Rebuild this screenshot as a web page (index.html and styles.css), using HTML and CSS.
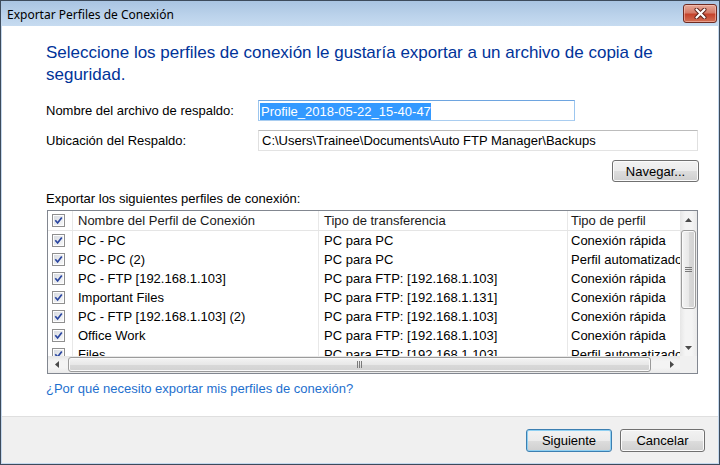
FILE: index.html
```html
<!DOCTYPE html>
<html lang="es">
<head>
<meta charset="utf-8">
<title>Exportar Perfiles de Conexión</title>
<link rel="stylesheet" href="styles.css">
</head>
<body>
<div class="window">
  <div class="titlebar">
    <span class="title">Exportar Perfiles de Conexión</span>
    <div class="close">
      <svg width="13" height="11" viewBox="0 0 13 11">
        <path d="M2.5 1.5 L10.5 9.5 M10.5 1.5 L2.5 9.5" stroke="#5a2018" stroke-width="4" stroke-linecap="round" fill="none"/>
        <path d="M2.5 1.5 L10.5 9.5 M10.5 1.5 L2.5 9.5" stroke="#ffffff" stroke-width="2.2" stroke-linecap="round" fill="none"/>
      </svg>
    </div>
  </div>
  <div class="client">
    <div class="content">
      <h1 class="heading">Seleccione los perfiles de conexión le gustaría exportar a un archivo de copia de<br>seguridad.</h1>
      <div class="form-row first">
        <span class="label">Nombre del archivo de respaldo:</span>
        <div class="input focus short"><span class="sel">Profile_2018-05-22_15-40-47</span></div>
      </div>
      <div class="form-row">
        <span class="label">Ubicación del Respaldo:</span>
        <div class="input long"><span class="val">C:\Users\Trainee\Documents\Auto FTP Manager\Backups</span></div>
      </div>
      <div class="browse-row">
        <button class="btn browse">Navegar...</button>
      </div>
      <div class="list-label">Exportar los siguientes perfiles de conexión:</div>
      <div class="listview">
        <div class="lv-body">
          <div class="lv-row lv-head">
            <div class="cell c0"><span class="cb"><svg viewBox="0 0 9 9"><path d="M1.3 4.3 L3.6 7 L7.8 1.4" stroke="#2a46a0" stroke-width="1.7" fill="none"/></svg></span></div>
            <div class="cell c1">Nombre del Perfil de Conexión</div>
            <div class="cell c2">Tipo de transferencia</div>
            <div class="cell c3">Tipo de perfil</div>
          </div>
          <div class="lv-row">
            <div class="cell c0"><span class="cb"><svg viewBox="0 0 9 9"><path d="M1.3 4.3 L3.6 7 L7.8 1.4" stroke="#2a46a0" stroke-width="1.7" fill="none"/></svg></span></div>
            <div class="cell c1">PC - PC</div>
            <div class="cell c2">PC para PC</div>
            <div class="cell c3">Conexión rápida</div>
          </div>
          <div class="lv-row">
            <div class="cell c0"><span class="cb"><svg viewBox="0 0 9 9"><path d="M1.3 4.3 L3.6 7 L7.8 1.4" stroke="#2a46a0" stroke-width="1.7" fill="none"/></svg></span></div>
            <div class="cell c1">PC - PC (2)</div>
            <div class="cell c2">PC para PC</div>
            <div class="cell c3">Perfil automatizado</div>
          </div>
          <div class="lv-row">
            <div class="cell c0"><span class="cb"><svg viewBox="0 0 9 9"><path d="M1.3 4.3 L3.6 7 L7.8 1.4" stroke="#2a46a0" stroke-width="1.7" fill="none"/></svg></span></div>
            <div class="cell c1">PC - FTP [192.168.1.103]</div>
            <div class="cell c2">PC para FTP: [192.168.1.103]</div>
            <div class="cell c3">Conexión rápida</div>
          </div>
          <div class="lv-row">
            <div class="cell c0"><span class="cb"><svg viewBox="0 0 9 9"><path d="M1.3 4.3 L3.6 7 L7.8 1.4" stroke="#2a46a0" stroke-width="1.7" fill="none"/></svg></span></div>
            <div class="cell c1">Important Files</div>
            <div class="cell c2">PC para FTP: [192.168.1.131]</div>
            <div class="cell c3">Conexión rápida</div>
          </div>
          <div class="lv-row">
            <div class="cell c0"><span class="cb"><svg viewBox="0 0 9 9"><path d="M1.3 4.3 L3.6 7 L7.8 1.4" stroke="#2a46a0" stroke-width="1.7" fill="none"/></svg></span></div>
            <div class="cell c1">PC - FTP [192.168.1.103] (2)</div>
            <div class="cell c2">PC para FTP: [192.168.1.103]</div>
            <div class="cell c3">Conexión rápida</div>
          </div>
          <div class="lv-row">
            <div class="cell c0"><span class="cb"><svg viewBox="0 0 9 9"><path d="M1.3 4.3 L3.6 7 L7.8 1.4" stroke="#2a46a0" stroke-width="1.7" fill="none"/></svg></span></div>
            <div class="cell c1">Office Work</div>
            <div class="cell c2">PC para FTP: [192.168.1.103]</div>
            <div class="cell c3">Conexión rápida</div>
          </div>
          <div class="lv-row">
            <div class="cell c0"><span class="cb"><svg viewBox="0 0 9 9"><path d="M1.3 4.3 L3.6 7 L7.8 1.4" stroke="#2a46a0" stroke-width="1.7" fill="none"/></svg></span></div>
            <div class="cell c1">Files</div>
            <div class="cell c2">PC para FTP: [192.168.1.103]</div>
            <div class="cell c3">Perfil automatizado</div>
          </div>
        </div>
        <div class="vscroll">
          <div class="sb-btn"><svg width="7" height="4" viewBox="0 0 7 4"><path d="M0 4 L3.5 0 L7 4 Z" fill="#4a4a4a"/></svg></div>
          <div class="vthumb"><svg width="7" height="5" viewBox="0 0 7 5"><path d="M0 0.5 H7 M0 2.5 H7 M0 4.5 H7" stroke="#7a7a7a" stroke-width="1"/></svg></div>
          <div class="sb-fill"></div>
          <div class="sb-btn"><svg width="7" height="4" viewBox="0 0 7 4"><path d="M0 0 L3.5 4 L7 0 Z" fill="#4a4a4a"/></svg></div>
        </div>
        <div class="hscroll">
          <div class="sb-btn"><svg width="4" height="7" viewBox="0 0 4 7"><path d="M4 0 L0 3.5 L4 7 Z" fill="#4a4a4a"/></svg></div>
          <div class="hthumb"><svg width="5" height="7" viewBox="0 0 5 7"><path d="M0.5 0 V7 M2.5 0 V7 M4.5 0 V7" stroke="#7a7a7a" stroke-width="1"/></svg></div>
          <div class="sb-fill"></div>
          <div class="sb-btn"><svg width="4" height="7" viewBox="0 0 4 7"><path d="M0 0 L4 3.5 L0 7 Z" fill="#4a4a4a"/></svg></div>
        </div>
        <div class="corner"></div>
      </div>
      <a class="help-link" href="#">¿Por qué necesito exportar mis perfiles de conexión?</a>
    </div>
    <div class="footer">
      <button class="btn default next">Siguiente</button>
      <button class="btn cancel">Cancelar</button>
    </div>
  </div>
</div>
</body>
</html>
```
FILE: styles.css
```css
html, body {
  margin: 0;
  padding: 0;
}
body {
  width: 720px;
  height: 465px;
  overflow: hidden;
  font-family: "Liberation Sans", Arial, sans-serif;
  font-size: 13px;
  color: #000;
}
.window {
  width: 720px;
  height: 465px;
  box-sizing: border-box;
  border: 1px solid #3d4b5c;
  background: #c4d8ee;
  display: flex;
  flex-direction: column;
}
.titlebar {
  height: 25px;
  flex: none;
  display: flex;
  align-items: flex-start;
  background: linear-gradient(#a9c4e2, #bcd3eb 60%, #c6dbf0);
}
.title {
  font-family: "Noto Sans", "Liberation Sans", sans-serif;
  font-size: 12px;
  line-height: 16px;
  margin: 6px 0 0 6px;
  color: #000;
}
.close {
  margin: 3px 2px 0 auto;
  width: 34px;
  height: 19px;
  box-sizing: border-box;
  border: 1px solid #6e2b22;
  border-radius: 3px;
  background: linear-gradient(#e6a898, #d57c69 45%, #c5432c 55%, #d27055);
  box-shadow: inset 0 0 0 1px rgba(255, 210, 200, 0.5);
  display: flex;
  align-items: center;
  justify-content: center;
}
.close svg {
  display: block;
}
.client {
  flex: 1;
  margin: 0 1px 1px;
  background: #fff;
  display: flex;
  flex-direction: column;
}
.content {
  flex: 1;
  padding: 16px 19px 0 44px;
  display: flex;
  flex-direction: column;
}
.heading {
  margin: 0;
  font-family: "Liberation Sans", Arial, sans-serif;
  font-weight: normal;
  font-size: 17px;
  line-height: 22px;
  color: #003399;
}
.form-row {
  display: flex;
  align-items: center;
  height: 21px;
  margin-top: 9px;
}
.form-row.first {
  margin-top: 14px;
}
.label {
  width: 212px;
  flex: none;
  line-height: 16px;
}
.input {
  box-sizing: border-box;
  height: 21px;
  border: 1px solid;
  border-color: #bcbcbc #e0e0e0 #e3e3e3 #e0e0e0;
  display: flex;
  align-items: center;
  padding-left: 1px;
  white-space: nowrap;
  overflow: hidden;
}
.input.focus {
  border-color: #6ea5e0 #9cc6ef #a9cdf0 #9cc6ef;
}
.input.short {
  width: 317px;
}
.input.long {
  width: 440px;
}
.sel {
  background: #3399ff;
  color: #fff;
  line-height: 17px;
  padding-left: 1px;
  margin-top: 1px;
}
.val {
  padding-left: 2px;
  line-height: 16px;
}
.browse-row {
  display: flex;
  justify-content: flex-end;
  margin-top: 9px;
}
.btn {
  font-family: "Liberation Sans", Arial, sans-serif;
  font-size: 13px;
  color: #000;
  box-sizing: border-box;
  height: 22px;
  padding: 0;
  border: 1px solid #707070;
  border-radius: 3px;
  background: linear-gradient(#f2f2f2, #ebebeb 50%, #dddddd 51%, #cfcfcf);
  box-shadow: inset 0 0 0 1px #fbfbfb;
}
.btn.browse {
  width: 87px;
}
.list-label {
  margin-top: 9px;
  line-height: 16px;
}
.listview {
  margin: 3px 0 0 1px;
  width: 651px;
  height: 164px;
  box-sizing: border-box;
  border: 1px solid #828790;
  display: grid;
  grid-template-columns: 632px 17px;
  grid-template-rows: 145px 17px;
}
.lv-body {
  overflow: hidden;
  grid-column: 1;
  grid-row: 1;
}
.lv-row {
  display: flex;
  height: 19px;
  width: 760px;
}
.lv-head {
  height: 20px;
  box-sizing: border-box;
  border-bottom: 1px solid #e5e5e5;
}
.cell {
  box-sizing: border-box;
  border-right: 1px solid #e8e8e8;
  line-height: 19px;
  white-space: nowrap;
  overflow: hidden;
  flex: none;
}
.c0 {
  width: 25px;
  padding-left: 4px;
  display: flex;
  align-items: center;
}
.c1 {
  width: 246px;
  padding-left: 5px;
}
.c2 {
  width: 249px;
  padding-left: 5px;
}
.c3 {
  width: 240px;
  padding-left: 3px;
  border-right: none;
}
.lv-head .cell {
  color: #1a1a1a;
}
.cb {
  display: block;
  width: 13px;
  height: 13px;
  box-sizing: border-box;
  border: 1px solid #8f8f8f;
  padding: 1px;
  background: #fdfdfd;
}
.cb svg {
  display: block;
  width: 9px;
  height: 9px;
  background: linear-gradient(135deg, #d8dbe1, #f6f7f8);
}
.vscroll {
  grid-column: 2;
  grid-row: 1;
  display: flex;
  flex-direction: column;
  background: linear-gradient(90deg, #e6e6e6, #f4f4f4 30%, #f4f4f4 70%, #e9e9e9);
}
.hscroll {
  grid-column: 1;
  grid-row: 2;
  display: flex;
  background: linear-gradient(#e6e6e6, #f4f4f4 30%, #f4f4f4 70%, #e9e9e9);
}
.sb-btn {
  width: 17px;
  height: 17px;
  flex: none;
  display: flex;
  align-items: center;
  justify-content: center;
}
.sb-btn svg {
  display: block;
}
.sb-fill {
  flex: 1;
}
.vthumb {
  margin: 2px 0 0 1px;
  width: 15px;
  height: 79px;
  box-sizing: border-box;
  border: 1px solid #9b9b9b;
  border-radius: 3px;
  background: linear-gradient(90deg, #f4f4f4, #e8e8e8 50%, #d9d9d9 51%, #d2d2d2);
  box-shadow: inset 0 0 0 1px #fafafa;
  display: flex;
  align-items: center;
  justify-content: center;
}
.hthumb {
  margin: 1px 0 0 3px;
  width: 583px;
  height: 15px;
  box-sizing: border-box;
  border: 1px solid #9b9b9b;
  border-radius: 3px;
  background: linear-gradient(#f4f4f4, #e8e8e8 50%, #d9d9d9 51%, #d2d2d2);
  box-shadow: inset 0 0 0 1px #fafafa;
  display: flex;
  align-items: center;
  justify-content: center;
}
.vthumb svg, .hthumb svg {
  display: block;
}
.corner {
  grid-column: 2;
  grid-row: 2;
  background: #f0f0f0;
}
.help-link {
  margin-top: 7px;
  line-height: 16px;
  color: #1e6fce;
  text-decoration: none;
  align-self: flex-start;
}
.footer {
  height: 47px;
  flex: none;
  box-sizing: border-box;
  border-top: 1px solid #dfdfdf;
  background: #f0f0f0;
  display: flex;
  justify-content: flex-end;
  align-items: flex-start;
  padding: 12px 13px 0 0;
  gap: 8px;
}
.footer .btn {
  height: 23px;
}
.btn.next {
  width: 86px;
}
.btn.cancel {
  width: 85px;
}
.btn.default {
  border-color: #3c7fb1;
  box-shadow: inset 0 0 0 1px #8fd0f2;
}
```
